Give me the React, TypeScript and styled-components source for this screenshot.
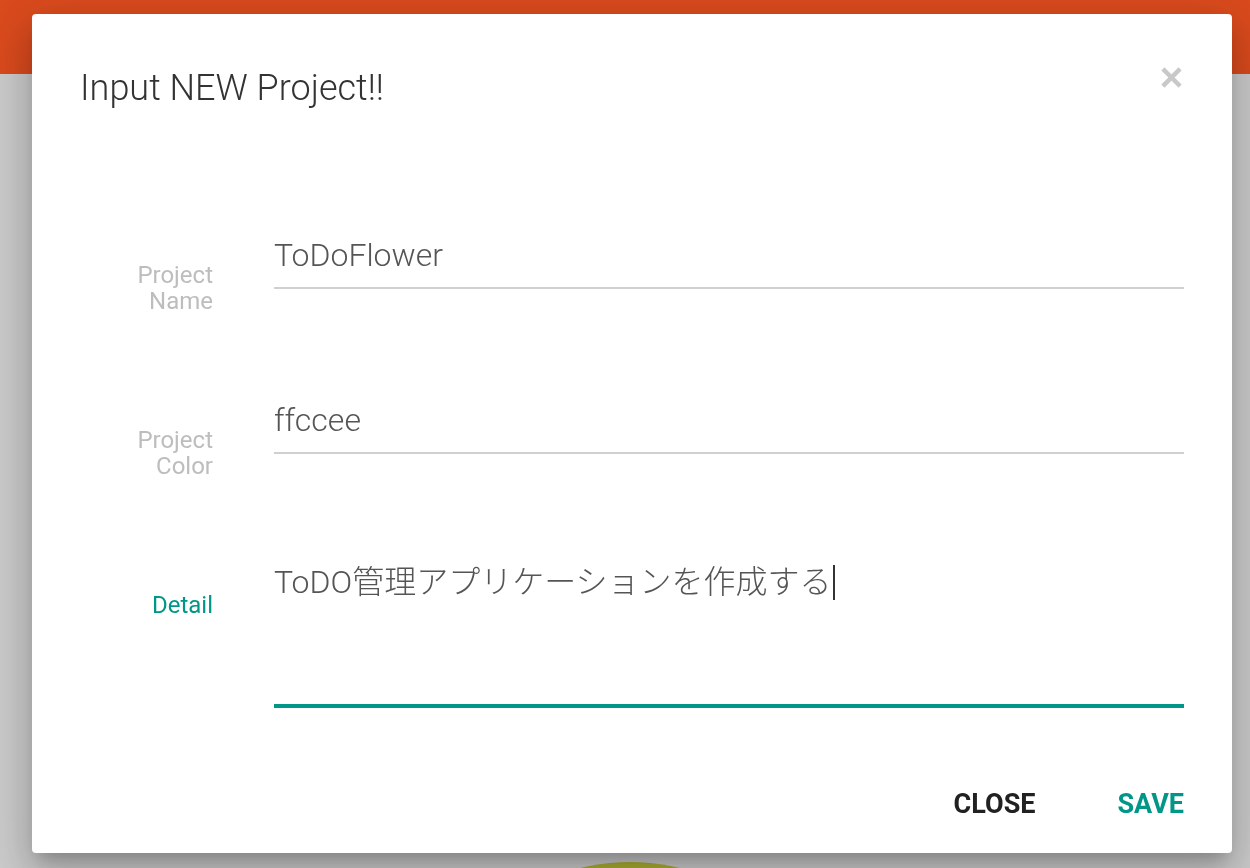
import React from "react";
import styled, { createGlobalStyle } from "styled-components";

const GlobalStyle = createGlobalStyle`
  html, body {
    margin: 0;
    padding: 0;
  }
  body {
    background: #eeeeee;
    font-family: Roboto, "Noto Sans CJK JP", sans-serif;
    overflow: hidden;
  }
`;

const Page = styled.div`
  position: relative;
  width: 100%;
  height: 868px;
  overflow: hidden;
  background: #eeeeee;
`;

const NavBar = styled.header`
  height: 74px;
  background: #ff5722;
`;

const Blossom = styled.div`
  position: absolute;
  left: 420px;
  top: 862px;
  width: 420px;
  height: 420px;
  border-radius: 50%;
  background: #c9cc3a;
`;

const Overlay = styled.div`
  position: fixed;
  inset: 0;
  background: rgba(0, 0, 0, 0.15);
`;

const Modal = styled.div`
  position: fixed;
  left: 32px;
  top: 14px;
  width: 1200px;
  height: 839px;
  box-sizing: border-box;
  padding: 53px 48px 0;
  background: #ffffff;
  border-radius: 4px;
  box-shadow: 0 24px 38px 3px rgba(0, 0, 0, 0.14),
    0 9px 46px 8px rgba(0, 0, 0, 0.12), 0 11px 15px -7px rgba(0, 0, 0, 0.2);
  display: flex;
  flex-direction: column;
`;

const Header = styled.div`
  display: flex;
  justify-content: space-between;
  align-items: flex-start;
`;

const Title = styled.h4`
  margin: 0;
  font-family: Roboto, sans-serif;
  font-weight: 300;
  font-size: 36px;
  line-height: 43px;
  color: #333333;
`;

const CloseIcon = styled.button`
  display: block;
  width: 21px;
  height: 21px;
  margin: 0 2px 0 0;
  padding: 0;
  border: none;
  background: none;
  cursor: pointer;
  svg {
    display: block;
  }
`;

const Form = styled.div`
  margin-top: 120px;
  display: flex;
  flex-direction: column;
  gap: 81px;
`;

const Row = styled.div`
  display: grid;
  grid-template-columns: 133px 1fr;
  column-gap: 61px;
  align-items: start;
`;

const Label = styled.label<{ $active?: boolean }>`
  padding-top: 32px;
  text-align: right;
  font-family: Roboto, sans-serif;
  font-size: 24px;
  line-height: 26px;
  font-weight: 400;
  color: ${(p) => (p.$active ? "#009688" : "#bdbdbd")};
`;

const LabelLine = styled.span`
  display: block;
`;

const TextInput = styled.input`
  display: block;
  width: 100%;
  height: 59px;
  box-sizing: border-box;
  margin: 0;
  padding: 2px 0 10px;
  border: none;
  border-bottom: 2px solid #d0d0d0;
  border-radius: 0;
  background: transparent;
  outline: none;
  font-family: Roboto, "Noto Sans CJK JP", sans-serif;
  font-weight: 300;
  font-size: 32px;
  line-height: 45px;
  color: #555555;
`;

const TextArea = styled.div`
  box-sizing: border-box;
  height: 148px;
  border-bottom: 4px solid #009688;
  font-family: Roboto, "Noto Sans CJK JP", sans-serif;
  font-weight: 300;
  font-size: 32px;
  line-height: 45px;
  color: #555555;
  white-space: nowrap;
`;

const Caret = styled.span`
  display: inline-block;
  width: 2px;
  height: 35px;
  margin-left: 1px;
  background: #333333;
  vertical-align: -7px;
`;

const Footer = styled.div`
  margin-top: 78px;
  display: flex;
  justify-content: flex-end;
  gap: 82px;
`;

const FlatButton = styled.button<{ $primary?: boolean }>`
  margin: 0;
  padding: 0;
  border: none;
  background: none;
  cursor: pointer;
  font-family: Roboto, sans-serif;
  font-weight: 700;
  font-size: 27px;
  line-height: 36px;
  text-transform: uppercase;
  color: ${(p) => (p.$primary ? "#009688" : "#212121")};
`;

export default function App() {
  return (
    <Page>
      <GlobalStyle />
      <NavBar />
      <Blossom />
      <Overlay />
      <Modal>
        <Header>
          <Title>Input NEW Project!!</Title>
          <CloseIcon aria-label="close">
            <svg width="21" height="21" viewBox="0 0 21 21">
              <path
                d="M3.5 3.5 L17.5 17.5 M17.5 3.5 L3.5 17.5"
                stroke="#c8c8c8"
                strokeWidth="4.5"
                strokeLinecap="square"
                fill="none"
              />
            </svg>
          </CloseIcon>
        </Header>
        <Form>
          <Row>
            <Label>
              <LabelLine>Project</LabelLine>
              <LabelLine>Name</LabelLine>
            </Label>
            <TextInput readOnly value="ToDoFlower" />
          </Row>
          <Row>
            <Label>
              <LabelLine>Project</LabelLine>
              <LabelLine>Color</LabelLine>
            </Label>
            <TextInput readOnly value="ffccee" />
          </Row>
          <Row>
            <Label $active>Detail</Label>
            <TextArea>
              ToDO管理アプリケーションを作成する
              <Caret />
            </TextArea>
          </Row>
        </Form>
        <Footer>
          <FlatButton>Close</FlatButton>
          <FlatButton $primary>Save</FlatButton>
        </Footer>
      </Modal>
    </Page>
  );
}
